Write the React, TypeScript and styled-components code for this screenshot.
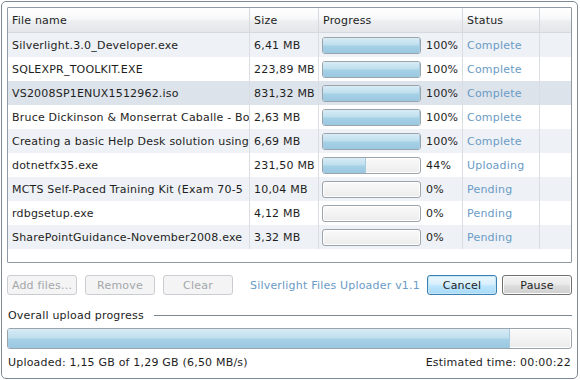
import React from 'react';
import styled, { createGlobalStyle, css } from 'styled-components';

const GlobalStyle = createGlobalStyle`
  html, body {
    margin: 0;
    padding: 0;
    background: #ffffff;
  }
  body {
    font-family: 'DejaVu Sans', Verdana, sans-serif;
    font-size: 11px;
    letter-spacing: 0.2px;
    color: #1e1e1e;
  }
`;

type FileItem = {
  name: string;
  size: string;
  progress: number;
  status: string;
};

// names are cut where the grid column clips them in the original
const files: FileItem[] = [
  { name: 'Silverlight.3.0_Developer.exe', size: '6,41 MB', progress: 100, status: 'Complete' },
  { name: 'SQLEXPR_TOOLKIT.EXE', size: '223,89 MB', progress: 100, status: 'Complete' },
  { name: 'VS2008SP1ENUX1512962.iso', size: '831,32 MB', progress: 100, status: 'Complete' },
  { name: 'Bruce Dickinson & Monserrat Caballe - Bo', size: '2,63 MB', progress: 100, status: 'Complete' },
  { name: 'Creating a basic Help Desk solution using', size: '6,69 MB', progress: 100, status: 'Complete' },
  { name: 'dotnetfx35.exe', size: '231,50 MB', progress: 44, status: 'Uploading' },
  { name: 'MCTS Self-Paced Training Kit (Exam 70-5', size: '10,04 MB', progress: 0, status: 'Pending' },
  { name: 'rdbgsetup.exe', size: '4,12 MB', progress: 0, status: 'Pending' },
  { name: 'SharePointGuidance-November2008.exe', size: '3,32 MB', progress: 0, status: 'Pending' },
];

const COLS = '242px 69px 144px 77px 1fr';

const Panel = styled.div`
  margin: 1px 0 0 1px;
  width: 577px;
  height: 378px;
  box-sizing: border-box;
  border: 1px solid #7d8a96;
  border-radius: 5px;
  padding: 5px 5px 0 5px;
  display: flex;
  flex-direction: column;
`;

const Grid = styled.div`
  height: 256px;
  box-sizing: border-box;
  border: 1px solid #8f9aa5;
  border-radius: 1px;
  display: flex;
  flex-direction: column;
  background: #ffffff;
`;

const HeaderRow = styled.div`
  display: grid;
  grid-template-columns: ${COLS};
  height: 25px;
  background: linear-gradient(#ffffff 0%, #f7f8f9 45%, #eceef0 55%, #e4e6e9 100%);
  border-bottom: 1px solid #d5d9de;
  box-sizing: border-box;
`;

const HeaderCell = styled.div`
  display: flex;
  align-items: center;
  padding: 1px 0 0 4px;
  border-right: 1px solid #d6dadf;
  color: #1e1e1e;
  &:last-child {
    border-right: none;
  }
`;

const Row = styled.div<{ $tone: 'white' | 'alt' | 'selected' }>`
  display: grid;
  grid-template-columns: ${COLS};
  height: 24px;
  ${(p) =>
    p.$tone === 'alt'
      ? css`background: #eef1f5;`
      : p.$tone === 'selected'
      ? css`background: #dde3ea;`
      : css`background: #ffffff;`}
`;

const Cell = styled.div`
  display: flex;
  align-items: center;
  padding-left: 4px;
  border-right: 1px solid #dadee3;
  white-space: nowrap;
  overflow: hidden;
  min-width: 0;
  &:last-child {
    border-right: none;
  }
`;

const ProgressCell = styled(Cell)`
  padding-left: 3px;
`;

const Bar = styled.div<{ $width: number; $height: number }>`
  width: ${(p) => p.$width}px;
  height: ${(p) => p.$height}px;
  box-sizing: border-box;
  border: 1px solid #9ba3ab;
  border-radius: 3px;
  background: linear-gradient(#fafafa, #ececec);
  box-shadow: inset 0 0 0 1px #ffffff;
  overflow: hidden;
  flex-shrink: 0;
`;

const Fill = styled.div`
  height: 100%;
  background: linear-gradient(#d8ecf6 0%, #bfdfee 45%, #a6d0e6 55%, #9ac8e1 100%);
  border-right: 1px solid #a9cde0;
  box-sizing: border-box;
`;

const Percent = styled.span`
  margin-left: 5px;
  color: #1e1e1e;
`;

const StatusText = styled.span`
  color: #6a9bc6;
`;

const Controls = styled.div`
  display: flex;
  align-items: center;
  margin-top: 12px;
  height: 20px;
`;

const Button = styled.button<{ $variant?: 'disabled' | 'focus' | 'normal' }>`
  width: 70px;
  height: 20px;
  padding: 0;
  font-family: inherit;
  font-size: 11px;
  letter-spacing: inherit;
  border-radius: 3px;
  box-sizing: border-box;
  ${(p) =>
    p.$variant === 'disabled'
      ? css`
          border: 1px solid #c9ccd0;
          background: #f4f4f4;
          color: #a3a7ab;
        `
      : p.$variant === 'focus'
      ? css`
          border: 1px solid #3c7fb1;
          background: linear-gradient(#eaf6fd 0%, #d9f0fc 45%, #bee6fd 55%, #a7d9f5 100%);
          box-shadow: inset 0 0 0 1px #c4e5f6;
          color: #1e1e1e;
        `
      : css`
          border: 1px solid #707070;
          background: linear-gradient(#f2f2f2 0%, #ebebeb 45%, #dddddd 55%, #cfcfcf 100%);
          box-shadow: inset 0 0 0 1px #fcfcfc;
          color: #1e1e1e;
        `}
`;

const Spacer = styled.div<{ $w: number }>`
  width: ${(p) => p.$w}px;
  flex-shrink: 0;
`;

const Brand = styled.span`
  color: #6a9bc6;
  flex: 1;
  padding-left: 17px;
`;

const SectionTitle = styled.div`
  display: flex;
  align-items: center;
  margin-top: 13px;
  height: 14px;
  padding-left: 1px;
  &::after {
    content: '';
    flex: 1;
    height: 1px;
    background: #7d8a96;
    margin-left: 10px;
  }
`;

const OverallBar = styled.div`
  margin-top: 6px;
  height: 21px;
  box-sizing: border-box;
  border: 1px solid #9ba3ab;
  border-radius: 3px;
  background: linear-gradient(#fafafa, #ececec);
  box-shadow: inset 0 0 0 1px #ffffff;
  overflow: hidden;
`;

const Footer = styled.div`
  display: flex;
  justify-content: space-between;
  align-items: center;
  margin-top: 6px;
  height: 14px;
  padding: 0 1px;
`;

export default function App() {
  const tones: ('white' | 'alt' | 'selected')[] = files.map((_, i) =>
    i === 2 ? 'selected' : i % 2 === 0 ? 'alt' : 'white'
  );
  return (
    <>
      <GlobalStyle />
      <Panel>
        <Grid>
          <HeaderRow>
            <HeaderCell>File name</HeaderCell>
            <HeaderCell>Size</HeaderCell>
            <HeaderCell>Progress</HeaderCell>
            <HeaderCell>Status</HeaderCell>
            <HeaderCell />
          </HeaderRow>
          {files.map((f, i) => (
            <Row key={f.name} $tone={tones[i]}>
              <Cell>{f.name}</Cell>
              <Cell>{f.size}</Cell>
              <ProgressCell>
                <Bar $width={99} $height={17}>
                  {f.progress > 0 && <Fill style={{ width: `${f.progress}%` }} />}
                </Bar>
                <Percent>{f.progress}%</Percent>
              </ProgressCell>
              <Cell>
                <StatusText>{f.status}</StatusText>
              </Cell>
              <Cell />
            </Row>
          ))}
        </Grid>
        <Controls>
          <Button $variant="disabled">Add files...</Button>
          <Spacer $w={8} />
          <Button $variant="disabled">Remove</Button>
          <Spacer $w={8} />
          <Button $variant="disabled">Clear</Button>
          <Brand>Silverlight Files Uploader v1.1</Brand>
          <Button $variant="focus">Cancel</Button>
          <Spacer $w={5} />
          <Button $variant="normal">Pause</Button>
        </Controls>
        <SectionTitle>Overall upload progress</SectionTitle>
        <OverallBar>
          <Fill style={{ width: `${(1.15 / 1.29) * 100}%` }} />
        </OverallBar>
        <Footer>
          <span>Uploaded: 1,15 GB of 1,29 GB (6,50 MB/s)</span>
          <span>Estimated time: 00:00:22</span>
        </Footer>
      </Panel>
    </>
  );
}
